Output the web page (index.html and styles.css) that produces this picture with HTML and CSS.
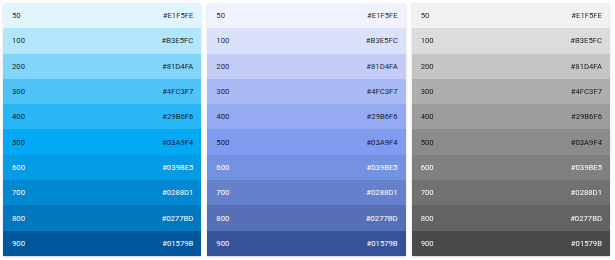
FILE: index.html
```html
<!DOCTYPE html>
<html lang="en">
<head>
<meta charset="utf-8">
<title>Palettes</title>
<link rel="stylesheet" href="styles.css">
</head>
<body>
<div class="palettes">
  <div class="card blue">
    <div class="row s50"><span>50</span><span>#E1F5FE</span></div>
    <div class="row s100"><span>100</span><span>#B3E5FC</span></div>
    <div class="row s200"><span>200</span><span>#81D4FA</span></div>
    <div class="row s300"><span>300</span><span>#4FC3F7</span></div>
    <div class="row s400"><span>400</span><span>#29B6F6</span></div>
    <div class="row s500"><span>500</span><span>#03A9F4</span></div>
    <div class="row s600 light"><span>600</span><span>#039BE5</span></div>
    <div class="row s700 light"><span>700</span><span>#0288D1</span></div>
    <div class="row s800 light"><span>800</span><span>#0277BD</span></div>
    <div class="row s900 light"><span>900</span><span>#01579B</span></div>
  </div>
  <div class="card lavender">
    <div class="row s50"><span>50</span><span>#E1F5FE</span></div>
    <div class="row s100"><span>100</span><span>#B3E5FC</span></div>
    <div class="row s200"><span>200</span><span>#81D4FA</span></div>
    <div class="row s300"><span>300</span><span>#4FC3F7</span></div>
    <div class="row s400"><span>400</span><span>#29B6F6</span></div>
    <div class="row s500"><span>500</span><span>#03A9F4</span></div>
    <div class="row s600 light"><span>600</span><span>#039BE5</span></div>
    <div class="row s700 light"><span>700</span><span>#0288D1</span></div>
    <div class="row s800 light"><span>800</span><span>#0277BD</span></div>
    <div class="row s900 light"><span>900</span><span>#01579B</span></div>
  </div>
  <div class="card blue gray">
    <div class="row s50"><span>50</span><span>#E1F5FE</span></div>
    <div class="row s100"><span>100</span><span>#B3E5FC</span></div>
    <div class="row s200"><span>200</span><span>#81D4FA</span></div>
    <div class="row s300"><span>300</span><span>#4FC3F7</span></div>
    <div class="row s400"><span>400</span><span>#29B6F6</span></div>
    <div class="row s500"><span>500</span><span>#03A9F4</span></div>
    <div class="row s600 light"><span>600</span><span>#039BE5</span></div>
    <div class="row s700 light"><span>700</span><span>#0288D1</span></div>
    <div class="row s800 light"><span>800</span><span>#0277BD</span></div>
    <div class="row s900 light"><span>900</span><span>#01579B</span></div>
  </div>
</div>
</body>
</html>
```
FILE: styles.css
```css
html, body {
  margin: 0;
  background: #ffffff;
}
body {
  font-family: Roboto, "Liberation Sans", sans-serif;
}
.palettes {
  display: flex;
  gap: 6px;
  height: 260px;
  box-sizing: border-box;
  padding: 3px 5px 4px 3px;
}
.card {
  flex: 1;
  display: flex;
  flex-direction: column;
  box-shadow: 0 1px 2px rgba(0, 0, 0, 0.18);
}
.row {
  flex: 1;
  display: flex;
  align-items: center;
  justify-content: space-between;
  padding: 0 8px 0 9px;
  font-size: 7.7px;
  font-weight: 400;
  color: rgba(0, 0, 0, 0.87);
}
.row.light {
  color: #ffffff;
}
.blue .s50 { background: #E1F5FE; }
.blue .s100 { background: #B3E5FC; }
.blue .s200 { background: #81D4FA; }
.blue .s300 { background: #4FC3F7; }
.blue .s400 { background: #29B6F6; }
.blue .s500 { background: #03A9F4; }
.blue .s600 { background: #039BE5; }
.blue .s700 { background: #0288D1; }
.blue .s800 { background: #0277BD; }
.blue .s900 { background: #01579B; }

.lavender .s50 { background: #F0F2FD; }
.lavender .s100 { background: #DCE1FB; }
.lavender .s200 { background: #C3CDF8; }
.lavender .s300 { background: #A9BAF4; }
.lavender .s400 { background: #95AAF2; }
.lavender .s500 { background: #809BEF; }
.lavender .s600 { background: #7592E0; }
.lavender .s700 { background: #6581CC; }
.lavender .s800 { background: #5770B5; }
.lavender .s900 { background: #36539A; }

.gray {
  filter: grayscale(1);
}
```
